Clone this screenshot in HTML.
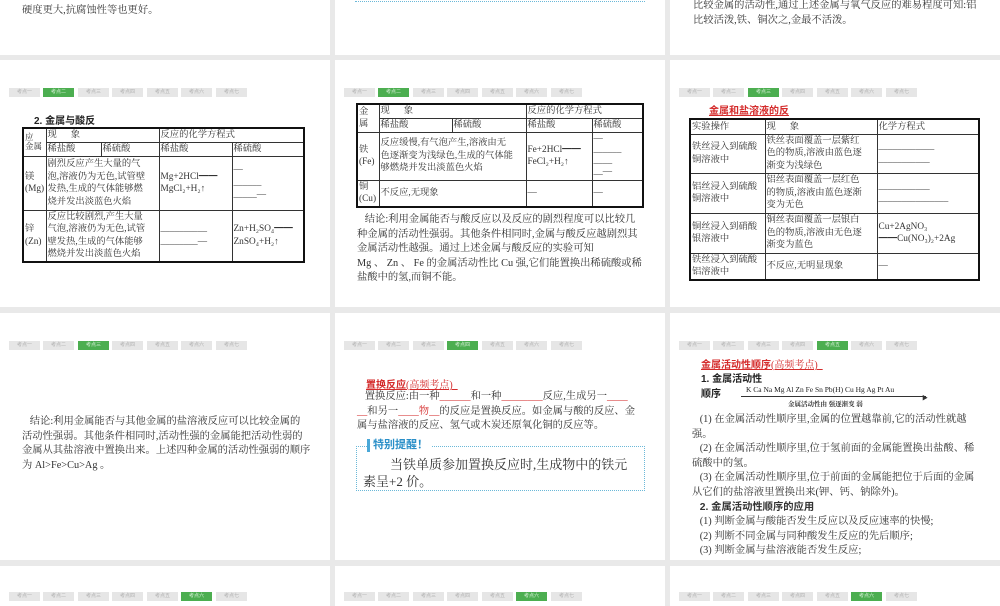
<!DOCTYPE html>
<html><head><meta charset="utf-8"><style>
*{margin:0;padding:0;box-sizing:border-box}
body{width:1000px;height:600px;background:#e9e9e9;position:relative;overflow:hidden;font-family:"Liberation Serif","Noto Serif CJK SC",serif;color:#333}
.p{position:absolute;background:#fff;overflow:hidden}
.a{position:absolute;white-space:nowrap}
.tabs{position:absolute;height:9px}
.tabs span{position:absolute;top:0;width:31px;height:9px;background:#e6e6e6;color:#b0b0b0;font:5px "Liberation Sans","Noto Sans CJK SC",sans-serif;text-align:center;line-height:9px}
.tabs span.on{background:#4cae50;color:#d8f0d8}
.t{font-size:10.3px;line-height:14.6px;color:#333}
table{position:absolute;border-collapse:collapse;border:2px solid #111;font-size:9.3px;line-height:12.5px;color:#333}
td{border:1px solid #333;padding:0 1px;vertical-align:middle}
.red{color:#d42a2a;text-decoration:underline;font-weight:bold;font-family:"Liberation Sans","Noto Sans CJK SC",sans-serif}
.b{font-weight:bold;font-family:"Liberation Sans","Noto Sans CJK SC",sans-serif;color:#222}
</style></head><body>

<div class="p" style="left:0;top:0;width:330px;height:55px">
<div class="a t" style="left:22px;top:4px">硬度更大,抗腐蚀性等也更好。</div>
</div>
<div class="p" style="left:335px;top:0;width:330px;height:55px">
<div class="a" style="left:20px;top:0;width:290px;height:2px;border-bottom:1px dotted #6bb8d8"></div>
</div>
<div class="p" style="left:670px;top:0;width:330px;height:55px">
<div class="a t" style="left:23px;top:-1px">比较金属的活动性,通过上述金属与氧气反应的难易程度可知:铝</div>
<div class="a t" style="left:23px;top:14px">比较活泼,铁、铜次之,金最不活泼。</div>
</div>

<!-- row 2 col1 -->
<div class="p" style="left:0;top:60px;width:330px;height:247px">
<div class="tabs" style="left:9px;top:28px"><span style="left:0">考点一</span><span class="on" style="left:34px">考点二</span><span style="left:69px">考点三</span><span style="left:103px">考点四</span><span style="left:138px">考点五</span><span style="left:172px">考点六</span><span style="left:207px">考点七</span></div>
<div class="a b" style="left:34px;top:52px;font-size:10px">2. 金属与酸反</div>
<table style="left:22px;top:67px;width:283px">
<tr style="height:14px"><td rowspan="2" style="width:23px;font-size:8.5px;line-height:9px">应<br>金属</td><td colspan="2">现&nbsp;&nbsp;&nbsp;&nbsp;&nbsp;&nbsp;象</td><td colspan="2">反应的化学方程式</td></tr>
<tr style="height:14px"><td style="width:55px">稀盐酸</td><td style="width:58px">稀硫酸</td><td style="width:73px">稀盐酸</td><td>稀硫酸</td></tr>
<tr style="height:54px"><td>镁<br>(Mg)</td><td colspan="2">剧烈反应产生大量的气<br>泡,溶液仍为无色,试管壁<br>发热,生成的气体能够燃<br>烧并发出淡蓝色火焰</td><td>Mg+2HCl━━<br>MgCl₂+H₂↑</td><td>—<br>______<br>_____—</td></tr>
<tr style="height:52px"><td>锌<br>(Zn)</td><td colspan="2">反应比较剧烈,产生大量<br>气泡,溶液仍为无色,试管<br>壁发热,生成的气体能够<br>燃烧并发出淡蓝色火焰</td><td>__________<br>________—</td><td>Zn+H₂SO₄━━<br>ZnSO₄+H₂↑</td></tr>
</table>
</div>

<!-- row 2 col2 -->
<div class="p" style="left:335px;top:60px;width:330px;height:247px">
<div class="tabs" style="left:9px;top:28px"><span style="left:0">考点一</span><span class="on" style="left:34px">考点二</span><span style="left:69px">考点三</span><span style="left:103px">考点四</span><span style="left:138px">考点五</span><span style="left:172px">考点六</span><span style="left:207px">考点七</span></div>
<table style="left:21px;top:43px;width:288px">
<tr style="height:14px"><td rowspan="2" style="width:22px">金<br>属</td><td colspan="2">现&nbsp;&nbsp;&nbsp;&nbsp;&nbsp;&nbsp;象</td><td colspan="2">反应的化学方程式</td></tr>
<tr style="height:14px"><td style="width:73px">稀盐酸</td><td style="width:74px">稀硫酸</td><td style="width:66px">稀盐酸</td><td>稀硫酸</td></tr>
<tr style="height:48px"><td>铁<br>(Fe)</td><td colspan="2">反应缓慢,有气泡产生,溶液由无<br>色逐渐变为浅绿色,生成的气体能<br>够燃烧并发出淡蓝色火焰</td><td>Fe+2HCl━━<br>FeCl₂+H₂↑</td><td style="line-height:11px">—<br>______<br>____<br>__—</td></tr>
<tr style="height:25px"><td>铜<br>(Cu)</td><td colspan="2">不反应,无现象</td><td>—</td><td>—</td></tr>
</table>
<div class="a t" style="left:22px;top:153px">&nbsp;&nbsp;&nbsp;结论:利用金属能否与酸反应以及反应的剧烈程度可以比较几<br>种金属的活动性强弱。其他条件相同时,金属与酸反应越剧烈其<br>金属活动性越强。通过上述金属与酸反应的实验可知<br>Mg 、 Zn 、 Fe 的金属活动性比 Cu 强,它们能置换出稀硫酸或稀<br>盐酸中的氢,而铜不能。</div>
</div>

<!-- row 2 col3 -->
<div class="p" style="left:670px;top:60px;width:330px;height:247px">
<div class="tabs" style="left:9px;top:28px"><span style="left:0">考点一</span><span style="left:34px">考点二</span><span class="on" style="left:69px">考点三</span><span style="left:103px">考点四</span><span style="left:138px">考点五</span><span style="left:172px">考点六</span><span style="left:207px">考点七</span></div>
<div class="a red" style="left:39px;top:42px;font-size:10px">金属和盐溶液的反</div>
<table style="left:19px;top:58px;width:291px">
<tr style="height:15px"><td style="width:75px">实验操作</td><td style="width:112px">现&nbsp;&nbsp;&nbsp;&nbsp;&nbsp;&nbsp;象</td><td>化学方程式</td></tr>
<tr style="height:39px"><td>铁丝浸入到硫酸<br>铜溶液中</td><td>铁丝表面覆盖一层紫红<br>色的物质,溶液由蓝色逐<br>渐变为浅绿色</td><td>____________<br>___________</td></tr>
<tr style="height:40px"><td>铝丝浸入到硫酸<br>铜溶液中</td><td>铝丝表面覆盖一层红色<br>的物质,溶液由蓝色逐渐<br>变为无色</td><td>___________<br>_______________</td></tr>
<tr style="height:40px"><td>铜丝浸入到硝酸<br>银溶液中</td><td>铜丝表面覆盖一层银白<br>色的物质,溶液由无色逐<br>渐变为蓝色</td><td>Cu+2AgNO₃<br>━━Cu(NO₃)₂+2Ag</td></tr>
<tr style="height:26px"><td>铁丝浸入到硫酸<br>铝溶液中</td><td>不反应,无明显现象</td><td>—</td></tr>
</table>
</div>

<!-- row 3 col1 -->
<div class="p" style="left:0;top:313px;width:330px;height:247px">
<div class="tabs" style="left:9px;top:28px"><span style="left:0">考点一</span><span style="left:34px">考点二</span><span class="on" style="left:69px">考点三</span><span style="left:103px">考点四</span><span style="left:138px">考点五</span><span style="left:172px">考点六</span><span style="left:207px">考点七</span></div>
<div class="a t" style="left:22px;top:102px">&nbsp;&nbsp;&nbsp;结论:利用金属能否与其他金属的盐溶液反应可以比较金属的<br>活动性强弱。其他条件相同时,活动性强的金属能把活动性弱的<br>金属从其盐溶液中置换出来。上述四种金属的活动性强弱的顺序<br>为 Al&gt;Fe&gt;Cu&gt;Ag 。</div>
</div>

<!-- row 3 col2 -->
<div class="p" style="left:335px;top:313px;width:330px;height:247px">
<div class="tabs" style="left:9px;top:28px"><span style="left:0">考点一</span><span style="left:34px">考点二</span><span style="left:69px">考点三</span><span class="on" style="left:103px">考点四</span><span style="left:138px">考点五</span><span style="left:172px">考点六</span><span style="left:207px">考点七</span></div>
<div class="a" style="left:31px;top:63px;font-size:10px"><span class="red">置换反应</span><span style="color:#d42a2a;text-decoration:underline">(高频考点)&nbsp;&nbsp;</span></div>
<div class="a t" style="left:22px;top:77px">&nbsp;&nbsp;&nbsp;置换反应:由一种<span style="color:#d42a2a">______</span>和一种<span style="color:#d42a2a">________</span>反应,生成另一<span style="color:#d42a2a">____</span><br><span style="color:#d42a2a">__</span>和另一<span style="color:#d42a2a">____物__</span>的反应是置换反应。如金属与酸的反应、金<br>属与盐溶液的反应、氢气或木炭还原氧化铜的反应等。</div>
<div class="a" style="left:21px;top:133px;width:289px;height:45px;border:1px dotted #6bb8d8"></div>
<div class="a" style="left:32px;top:126px;background:#fff;padding:0 3px;border-left:3px solid #4aa8d8;color:#2a8fc8;font:bold 11px 'Liberation Sans','Noto Sans CJK SC',sans-serif;line-height:13px">特别提醒！</div>
<div class="a" style="left:55px;top:143px;font-size:13px;line-height:17px;color:#333">当铁单质参加置换反应时,生成物中的铁元</div>
<div class="a" style="left:28px;top:160px;font-size:13px;line-height:17px;color:#333">素呈+2 价。</div>
</div>

<!-- row 3 col3 -->
<div class="p" style="left:670px;top:313px;width:330px;height:247px">
<div class="tabs" style="left:9px;top:28px"><span style="left:0">考点一</span><span style="left:34px">考点二</span><span style="left:69px">考点三</span><span style="left:103px">考点四</span><span class="on" style="left:138px">考点五</span><span style="left:172px">考点六</span><span style="left:207px">考点七</span></div>
<div class="a" style="left:31px;top:43px;font-size:10px"><span class="red">金属活动性顺序</span><span style="color:#d42a2a;text-decoration:underline">(高频考点)&nbsp;&nbsp;</span></div>
<div class="a b" style="left:31px;top:57px;font-size:10px">1. 金属活动性</div>
<div class="a b" style="left:31px;top:72px;font-size:10px">顺序</div>
<div class="a" style="left:76px;top:72px;font-size:7.5px;color:#222">K Ca Na Mg Al Zn Fe Sn Pb(H) Cu Hg Ag Pt Au</div>
<div class="a" style="left:71px;top:83px;width:185px;border-top:1px solid #333"></div>
<div class="a" style="left:252px;top:80px;font-size:6px">▶</div>
<div class="a" style="left:118px;top:86px;font-size:6.5px;font-weight:bold">金属活动性由 强逐渐变 弱</div>
<div class="a t" style="left:22px;top:100px">&nbsp;&nbsp;&nbsp;(1) 在金属活动性顺序里,金属的位置越靠前,它的活动性就越<br>强。<br>&nbsp;&nbsp;&nbsp;(2) 在金属活动性顺序里,位于氢前面的金属能置换出盐酸、稀<br>硫酸中的氢。<br>&nbsp;&nbsp;&nbsp;(3) 在金属活动性顺序里,位于前面的金属能把位于后面的金属<br>从它们的盐溶液里置换出来(钾、钙、钠除外)。<br>&nbsp;&nbsp;&nbsp;<b style="font-family:'Liberation Sans','Noto Sans CJK SC',sans-serif">2. 金属活动性顺序的应用</b><br>&nbsp;&nbsp;&nbsp;(1) 判断金属与酸能否发生反应以及反应速率的快慢;<br>&nbsp;&nbsp;&nbsp;(2) 判断不同金属与同种酸发生反应的先后顺序;<br>&nbsp;&nbsp;&nbsp;(3) 判断金属与盐溶液能否发生反应;</div>
</div>

<!-- row 4 -->
<div class="p" style="left:0;top:566px;width:330px;height:40px">
<div class="tabs" style="left:9px;top:26px"><span style="left:0">考点一</span><span style="left:34px">考点二</span><span style="left:69px">考点三</span><span style="left:103px">考点四</span><span style="left:138px">考点五</span><span class="on" style="left:172px">考点六</span><span style="left:207px">考点七</span></div>
</div>
<div class="p" style="left:335px;top:566px;width:330px;height:40px">
<div class="tabs" style="left:9px;top:26px"><span style="left:0">考点一</span><span style="left:34px">考点二</span><span style="left:69px">考点三</span><span style="left:103px">考点四</span><span style="left:138px">考点五</span><span class="on" style="left:172px">考点六</span><span style="left:207px">考点七</span></div>
</div>
<div class="p" style="left:670px;top:566px;width:330px;height:40px">
<div class="tabs" style="left:9px;top:26px"><span style="left:0">考点一</span><span style="left:34px">考点二</span><span style="left:69px">考点三</span><span style="left:103px">考点四</span><span style="left:138px">考点五</span><span class="on" style="left:172px">考点六</span><span style="left:207px">考点七</span></div>
</div>
</body></html>
